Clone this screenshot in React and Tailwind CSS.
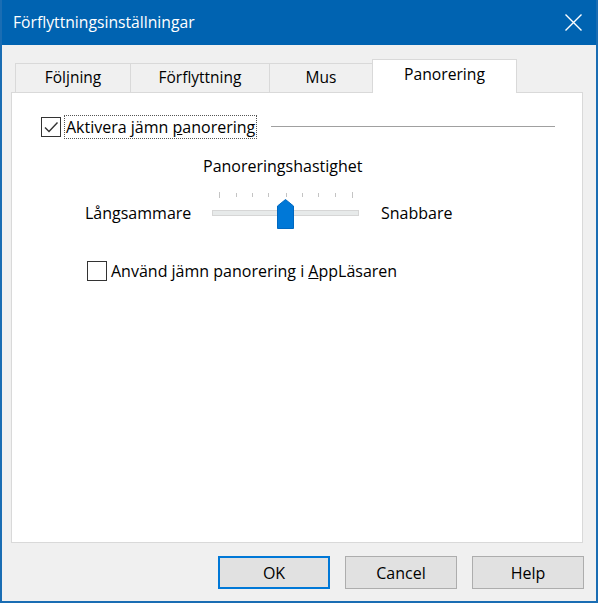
import React from "react";

const ticks = [7, 24, 40, 56, 74, 90, 106, 123, 140];

const CheckBox = ({ checked }) => (
  <div className="w-[20px] h-[20px] border border-[#333333] bg-white flex items-center justify-center shrink-0">
    {checked && (
      <svg width="16" height="16" viewBox="0 0 16 16">
        <path d="M2 8.5 L6 12.5 L14.5 3.5" fill="none" stroke="#333333" strokeWidth="1.4" />
      </svg>
    )}
  </div>
);

const Slider = () => (
  <div className="relative w-[147px] h-[30px]">
    <div className="absolute left-0 right-0 top-[11px] h-[6px] bg-[#e7eaea] border border-[#d6d6d6]" />
    <svg className="absolute left-[65px] top-0" width="17" height="30" viewBox="0 0 17 30">
      <path d="M0.5 7 L8.5 0.5 L16.5 7 L16.5 29.5 L0.5 29.5 Z" fill="#0078d7" stroke="#0068c0" strokeWidth="1" />
    </svg>
  </div>
);

const App = () => {
  const tabs = [
    { label: "Följning", w: "w-[115px]" },
    { label: "Förflyttning", w: "w-[139px]" },
    { label: "Mus", w: "w-[104px]" },
  ];

  return (
    <div
      className="w-[598px] h-[603px] flex flex-col bg-[#f0f0f0] border-x-2 border-b-2 border-[#1a6db3] text-black"
      style={{ fontFamily: '"Open Sans", "Noto Sans", sans-serif' }}
    >
      {/* Title bar */}
      <div className="h-[45px] shrink-0 bg-[#0063b1] flex items-center justify-between pl-[11px] pr-[14px] text-white text-[15.7px]">
        <span>Förflyttningsinställningar</span>
        <svg width="17" height="17" viewBox="0 0 17 17">
          <path d="M0.5 0.5 L16.5 16.5 M16.5 0.5 L0.5 16.5" stroke="white" strokeWidth="1.4" />
        </svg>
      </div>

      {/* Tabs + panel */}
      <div className="pl-[9px] pt-[14px]">
        <div className="flex items-end h-[33px] pl-[4px]">
          {tabs.map((t, i) => (
            <div
              key={t.label}
              className={`${t.w} h-[29px] bg-[#f0f0f0] border-t border-l border-[#d9d9d9] flex items-center justify-center text-[15.5px] ${i === 2 ? "border-r" : ""}`}
            >
              {t.label}
            </div>
          ))}
          <div className="w-[145px] h-[34px] -ml-px -mb-px relative z-10 bg-white border-t border-x border-[#d9d9d9] flex items-center justify-center pb-[4px] text-[15.7px]">
            Panorering
          </div>
        </div>

        <div className="w-[572px] h-[451px] bg-white border border-[#d9d9d9] pl-[29px] pt-[22px] text-[16px]">
          {/* Smooth panning checkbox with group line */}
          <div className="flex items-center h-[24px]">
            <CheckBox checked />
            <span className="ml-[3px] px-[1px] h-[24px] flex items-center border border-dotted border-[#555555] leading-none">
              Aktivera jämn&nbsp;<u>p</u>anorering
            </span>
            <div className="flex-1 ml-[14px] mr-[27px] h-[2px] border-t border-[#a0a0a0] border-b border-b-white" />
          </div>

          {/* Speed label */}
          <div className="mt-[17px] h-[20px] flex items-center pl-[162px]">
            Panoreringshastighet
          </div>

          {/* Ticks */}
          <div className="relative mt-[16px] ml-[171px] w-[147px] h-[6px]">
            {ticks.map((x, i) => (
              <div
                key={x}
                className={`absolute w-px bg-[#c4c4c4] ${i === 0 || i === ticks.length - 1 ? "h-[6px] top-0" : "h-[4px] top-[1px]"}`}
                style={{ left: x }}
              />
            ))}
          </div>

          {/* Slider row */}
          <div className="mt-[1px] flex items-center">
            <span className="w-[171px] pl-[44px] shrink-0 -mt-[2px]">Långsammare</span>
            <Slider />
            <span className="ml-[22px] -mt-[2px]">Snabbare</span>
          </div>

          {/* AppReader checkbox */}
          <div className="mt-[30px] ml-[46px] flex items-center h-[24px]">
            <CheckBox />
            <span className="ml-[4px]">
              Använd jämn panorering i <u>A</u>ppLäsaren
            </span>
          </div>
        </div>
      </div>

      {/* Buttons */}
      <div className="flex justify-end gap-[15px] pr-[12px] mt-[13px]">
        <button className="w-[112px] h-[33px] bg-[#e1e1e1] border-2 border-[#0078d7] text-[16px]">OK</button>
        <button className="w-[112px] h-[33px] bg-[#e1e1e1] border border-[#adadad] text-[16px]">Cancel</button>
        <button className="w-[112px] h-[33px] bg-[#e1e1e1] border border-[#adadad] text-[16px]">Help</button>
      </div>
    </div>
  );
};

export default App;
